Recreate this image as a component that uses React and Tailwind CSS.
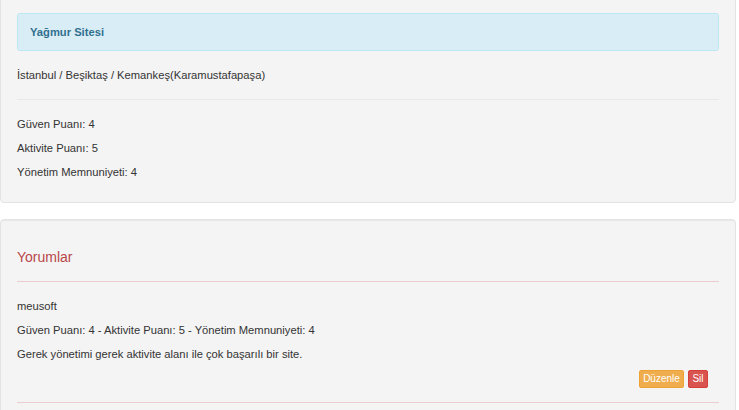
import React from 'react';

const site = {
  name: 'Yağmur Sitesi',
  location: 'İstanbul / Beşiktaş / Kemankeş(Karamustafapaşa)',
  scores: [
    ['Güven Puanı', 4],
    ['Aktivite Puanı', 5],
    ['Yönetim Memnuniyeti', 4],
  ],
};

const comments = [
  {
    user: 'meusoft',
    scores: 'Güven Puanı: 4 - Aktivite Puanı: 5 - Yönetim Memnuniyeti: 4',
    text: 'Gerek yönetimi gerek aktivite alanı ile çok başarılı bir site.',
  },
];

function Line({ children }) {
  return <p className="h-[24px] leading-[24px]">{children}</p>;
}

export default function App() {
  return (
    <div className="w-[739px] h-[410px] overflow-hidden bg-white text-[11.2px] text-[#333] font-['Liberation_Sans',Arial,sans-serif]">
      <div className="-mt-[4px] w-[736px] bg-[#f4f4f4] border border-[#e3e3e3] rounded-[4px] shadow-[inset_0_1px_1px_rgba(0,0,0,0.05)] px-[16px] pt-[16px] pb-[18px]">
        <div className="h-[38px] flex items-center px-[12px] bg-[#d9edf7] border border-[#bce8f1] rounded-[3px] text-[#31708f] font-bold">
          {site.name}
        </div>
        <div className="mt-[12px]">
          <Line>{site.location}</Line>
        </div>
        <hr className="mt-[12px] border-0 border-t border-[#e8e8e8]" />
        <div className="mt-[12px]">
          {site.scores.map(([k, v]) => (
            <Line key={k}>
              {k}: {v}
            </Line>
          ))}
        </div>
      </div>

      <div className="mt-[16px] w-[736px] bg-[#f4f4f4] border border-[#e3e3e3] rounded-[4px] shadow-[inset_0_1px_1px_rgba(0,0,0,0.05)] px-[16px] pt-[16px] pb-[16px]">
        <h3 className="mt-[11px] h-[20px] leading-[20px] text-[14px] text-[#b9474a]">Yorumlar</h3>
        <hr className="mt-[14px] border-0 border-t border-[#ebccd1]" />
        {comments.map((c) => (
          <div key={c.user}>
            <div className="mt-[12px]">
              <Line>{c.user}</Line>
              <Line>{c.scores}</Line>
              <Line>{c.text}</Line>
            </div>
            <div className="mt-[4px] flex justify-end gap-[4px] pr-[11px]">
              <button className="w-[45px] h-[18px] bg-[#f0ad4e] border border-[#eea236] rounded-[2px] text-white text-[10px] leading-none">
                Düzenle
              </button>
              <button className="w-[20px] h-[18px] bg-[#d9534f] border border-[#d43f3a] rounded-[2px] text-white text-[10px] leading-none">
                Sil
              </button>
            </div>
            <hr className="mt-[14px] border-0 border-t border-[#ebccd1]" />
          </div>
        ))}
      </div>
    </div>
  );
}
